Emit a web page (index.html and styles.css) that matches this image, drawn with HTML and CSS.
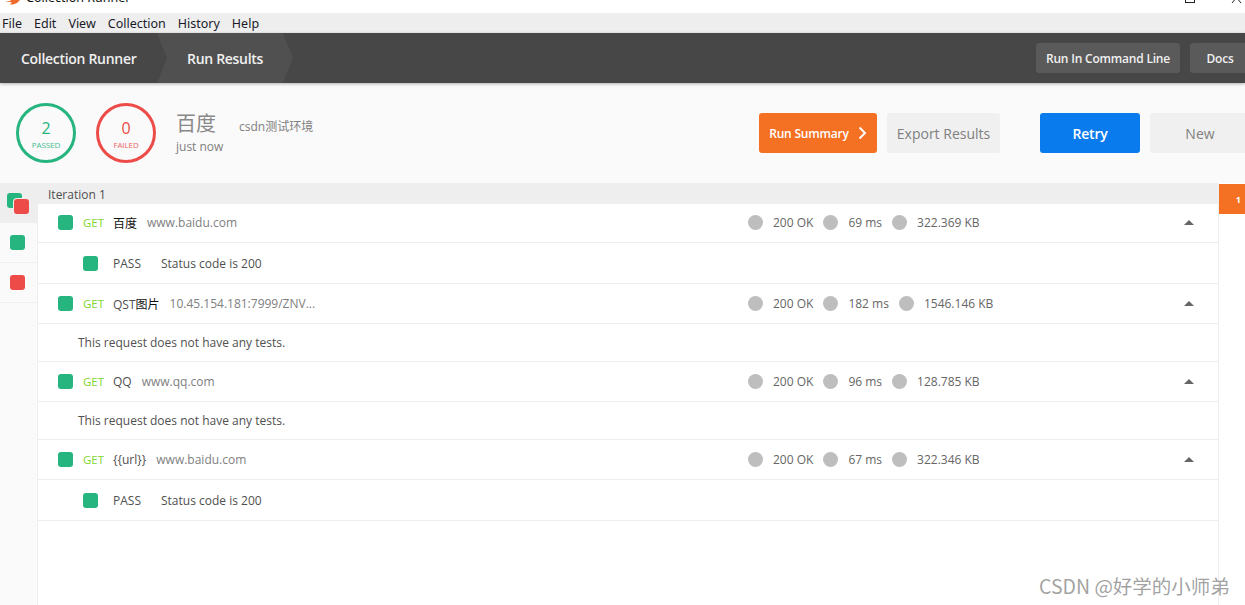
FILE: index.html
```html
<!DOCTYPE html>
<html lang="zh">
<head>
<meta charset="utf-8">
<title>Collection Runner</title>
<link rel="stylesheet" href="styles.css">
</head>
<body>
<div class="app">
  <div class="titlebar">
    <div class="title-left">
      <svg class="logo" width="15" height="5" viewBox="0 0 15 5"><path d="M0 1 L5 1 L6 0 L15 0 L12 3 L8 4.5 L5 4.5 L7 2.5 Z" fill="#ef6a2d"/></svg>
      <span class="title-text">Collection Runner</span>
    </div>
    <div class="win-controls">
      <span class="win-max"></span>
      <svg class="win-close" width="11" height="3" viewBox="0 0 11 3"><path d="M3.5 0 L1 3 M7.5 0 L10 3" stroke="#222" stroke-width="1" fill="none"/></svg>
    </div>
  </div>
  <nav class="menubar">
    <span>File</span><span>Edit</span><span>View</span><span>Collection</span><span>History</span><span>Help</span>
  </nav>
  <header class="header">
    <div class="crumb crumb-first">Collection Runner</div>
    <div class="crumb crumb-active">Run Results</div>
    <div class="header-actions">
      <button class="hbtn hbtn-cli">Run In Command Line</button>
      <button class="hbtn hbtn-docs">Docs</button>
    </div>
  </header>
  <section class="summary">
    <div class="ring ring-pass"><span class="ring-num">2</span><span class="ring-label">PASSED</span></div>
    <div class="ring ring-fail"><span class="ring-num">0</span><span class="ring-label">FAILED</span></div>
    <div class="run-info">
      <div class="run-top"><span class="run-name">百度</span><span class="run-env">csdn测试环境</span></div>
      <div class="run-time">just now</div>
    </div>
    <div class="summary-actions">
      <button class="btn btn-orange">Run Summary
        <svg class="chev" width="9" height="14" viewBox="0 0 9 14"><path d="M1.5 1.5 L7 7 L1.5 12.5" stroke="#fff" stroke-width="2" fill="none"/></svg>
      </button>
      <button class="btn btn-grey btn-export">Export Results</button>
      <button class="btn btn-blue">Retry</button>
      <button class="btn btn-grey btn-new">New</button>
    </div>
  </section>
  <main class="content">
    <aside class="side">
      <div class="tab tab-all"><i class="sq sq-back"></i><i class="sq sq-red sq-front"></i></div>
      <div class="tab"><i class="sq"></i></div>
      <div class="tab"><i class="sq sq-red"></i></div>
    </aside>
    <div class="results">
      <div class="iter">Iteration 1</div>
      <div class="req req-first">
        <i class="sq"></i><span class="method">GET</span><span class="name cjk-dark">百度</span><span class="url">www.baidu.com</span>
        <div class="meta"><i class="dot"></i><span>200 OK</span><i class="dot"></i><span>69 ms</span><i class="dot"></i><span>322.369 KB</span></div>
        <i class="caret"></i>
      </div>
      <div class="test"><i class="sq"></i><span class="pass">PASS</span><span>Status code is 200</span></div>
      <div class="req">
        <i class="sq"></i><span class="method">GET</span><span class="name">QST<span class="cjk-dark">图片</span></span><span class="url">10.45.154.181:7999/ZNV...</span>
        <div class="meta"><i class="dot"></i><span>200 OK</span><i class="dot"></i><span>182 ms</span><i class="dot"></i><span>1546.146 KB</span></div>
        <i class="caret"></i>
      </div>
      <div class="none">This request does not have any tests.</div>
      <div class="req">
        <i class="sq"></i><span class="method">GET</span><span class="name">QQ</span><span class="url">www.qq.com</span>
        <div class="meta"><i class="dot"></i><span>200 OK</span><i class="dot"></i><span>96 ms</span><i class="dot"></i><span>128.785 KB</span></div>
        <i class="caret"></i>
      </div>
      <div class="none">This request does not have any tests.</div>
      <div class="req">
        <i class="sq"></i><span class="method">GET</span><span class="name">{{url}}</span><span class="url">www.baidu.com</span>
        <div class="meta"><i class="dot"></i><span>200 OK</span><i class="dot"></i><span>67 ms</span><i class="dot"></i><span>322.346 KB</span></div>
        <i class="caret"></i>
      </div>
      <div class="test"><i class="sq"></i><span class="pass">PASS</span><span>Status code is 200</span></div>
    </div>
    <aside class="pager"><div class="page-num">1</div></aside>
  </main>
  <div class="watermark">CSDN @好学的小师弟</div>
</div>
</body>
</html>
```
FILE: styles.css
```css
* { box-sizing: border-box; }
html, body { margin: 0; padding: 0; height: 100%; overflow: hidden; background: #fff; }
body { font-family: "Open Sans", "Noto Sans CJK SC", sans-serif; font-size: 12px; color: #505050; }
.app { position: relative; width: 1245px; height: 605px; overflow: hidden; display: flex; flex-direction: column; }

.titlebar { height: 13px; flex: none; display: flex; justify-content: space-between; align-items: flex-start; overflow: hidden; background: #fff; }
.title-left { display: flex; align-items: flex-start; padding-left: 5px; gap: 6px; height: 5px; }
.logo { flex: none; }
.title-text { font-family: "Noto Sans", sans-serif; font-size: 12.5px; line-height: 16px; color: #111; margin-top: -10px; }
.win-controls { display: flex; gap: 36px; padding-right: 3px; height: 3px; }
.win-max { width: 10px; height: 10px; border: 1px solid #222; margin-top: -7px; }

.menubar { height: 20px; flex: none; background: #eee; display: flex; align-items: center; padding-left: 2px; gap: 12px; font-family: "Noto Sans", sans-serif; font-size: 12.5px; color: #1a1a2a; }

.header { height: 50px; flex: none; background: #474747; display: flex; align-items: stretch; box-shadow: 0 1px 3px rgba(0,0,0,.3); position: relative; color: #f0f0f0; font-size: 14px; font-weight: 600; letter-spacing: -.3px; }
.crumb { display: flex; align-items: center; }
.crumb-first { width: 157px; padding-left: 21px; }
.crumb-active { width: 136px; padding-left: 30px; background: #505050; clip-path: polygon(0 0, 126px 0, 136px 50%, 126px 100%, 0 100%, 10px 50%); }
.header-actions { margin-left: auto; display: flex; align-items: center; gap: 10px; margin-right: -5px; }
.hbtn { height: 30px; border: 0; border-radius: 3px; background: #5a5a5a; color: #f0f0f0; font: 600 12px "Open Sans", sans-serif; letter-spacing: -.2px; }
.hbtn-cli { width: 144px; }
.hbtn-docs { width: 60px; }

.summary { height: 100px; flex: none; background: #fafafa; display: flex; align-items: center; padding-left: 16px; }
.ring { width: 60px; height: 60px; border-radius: 50%; border: 3.5px solid; display: flex; flex-direction: column; align-items: center; justify-content: center; margin-right: 20px; }
.ring-pass { border-color: #26b47f; color: #26b47f; }
.ring-fail { border-color: #ed4b48; color: #ed4b48; }
.ring-num { font-size: 16px; line-height: 20px; margin-top: 2px; }
.ring-label { font-size: 8px; line-height: 12px; opacity: .85; letter-spacing: -.1px; margin-top: 1px; }
.run-info { display: flex; flex-direction: column; }
.run-top { display: flex; align-items: baseline; }
.run-name { font-family: "Liberation Serif", "Noto Sans CJK SC", serif; font-size: 20px; line-height: 28px; color: #888; width: 63px; }
.run-env { font-size: 12px; color: #808080; }
.run-time { font-size: 12px; line-height: 18px; color: #808080; }
.summary-actions { margin-left: auto; display: flex; gap: 10px; margin-right: -5px; }
.btn { height: 40px; border: 0; border-radius: 3px; font-family: "Open Sans", sans-serif; font-weight: 600; font-size: 14px; letter-spacing: -.2px; }
.btn-orange { width: 118px; background: #f47023; color: #fff; font-size: 12px; display: flex; align-items: center; justify-content: center; gap: 9px; }
.btn-grey { background: #f0f0f0; color: #808080; font-weight: 400; letter-spacing: 0; }
.btn-export { width: 113px; margin-right: 30px; }
.btn-blue { width: 100px; background: #097bed; color: #fff; }
.btn-new { width: 100px; }

.content { flex: 1; display: flex; min-height: 0; }
.side { width: 38px; flex: none; background: #fafafa; border-right: 1px solid #eee; }
.tab { height: 40px; display: flex; align-items: center; justify-content: center; padding-right: 2px; border-bottom: 1px solid #eee; position: relative; }
.tab-all { background: #eee; border-bottom: 0; }
.sq { display: block; flex: none; width: 15px; height: 15px; border-radius: 3px; background: #26b47f; }
.sq-red { background: #ed4b48; }
.sq-back { margin: -5px 0 0 -6px; }
.sq-front { position: absolute; left: 14px; top: 16px; box-shadow: 0 0 0 1px #eee; }

.results { flex: 1; min-width: 0; background: #fff; }
.iter { height: 21px; background: #eee; padding-left: 10px; font-size: 12px; line-height: 23px; color: #505050; }
.req { height: 40px; display: flex; align-items: center; padding-left: 20px; border-bottom: 1px solid #eee; }
.req-first { height: 39px; padding-bottom: 1px; }
.method { margin-left: 10px; width: 30px; color: #7fd62c; font-size: 11.5px; font-weight: 500; }
.name { color: #505050; font-size: 12px; margin-right: 10px; }
.cjk-dark { color: #111; font-family: "Noto Sans CJK SC", sans-serif; }
.url { color: #808080; font-size: 12px; }
.meta { position: absolute; left: 748px; display: flex; align-items: center; font-size: 12px; color: #666; }
.meta span { margin: 0 10px; }
.meta span:last-child { margin-right: 0; }
.dot { display: block; flex: none; width: 15px; height: 15px; border-radius: 50%; background: #bebebe; }
.caret { margin-left: auto; margin-right: 24px; width: 0; height: 0; border: 5px solid transparent; border-top: 0; border-bottom: 5px solid #666; }
.test { height: 41px; display: flex; align-items: center; padding-left: 45px; border-bottom: 1px solid #eee; color: #505050; }
.pass { margin-left: 15px; width: 48px; }
.none { height: 38px; display: flex; align-items: center; padding-left: 40px; border-bottom: 1px solid #eee; color: #505050; }

.pager { width: 27px; flex: none; border-left: 1px solid #eee; padding-top: 1px; }
.page-num { height: 30px; background: #f47023; color: #fff; font-size: 9px; font-weight: 700; display: flex; align-items: center; justify-content: flex-end; padding-right: 4px; }

.watermark { position: absolute; left: 1039px; top: 573px; font-family: "Noto Sans CJK SC", sans-serif; font-size: 19.5px; line-height: 26px; color: rgba(120,120,120,.7); white-space: nowrap; }
```
